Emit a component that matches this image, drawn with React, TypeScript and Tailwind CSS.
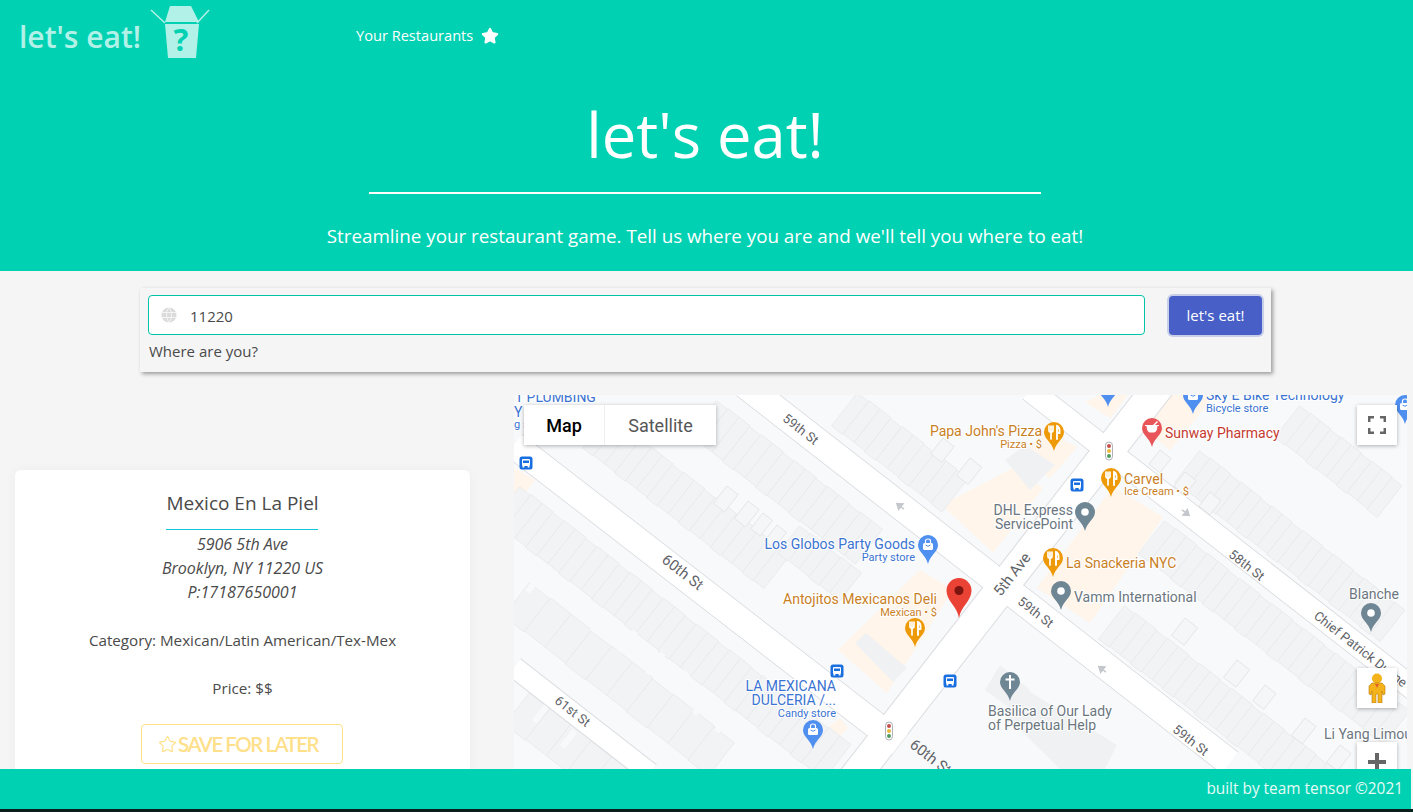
import React from 'react';
import { Star } from 'lucide-react';

const sans = { fontFamily: '"Open Sans", sans-serif' };
const ANGLE = 38;

// start point on the map, house count, house width, house depth
const houseRows = [
  [609, 414, 17, 13.5, 42],
  [800, 525, 6, 13, 35],
  [520, 486, 30, 14, 44],
  [717, 400, 15, 14, 44],
  [858, 392, 10, 14, 42],
  [1200, 450, 20, 13, 40],
  [1300, 405, 10, 13, 40],
  [1165, 520, 23, 13.5, 42],
  [1125, 605, 20, 13.5, 42],
  [530, 582, 10, 26, 42],
  [530, 692, 6, 26, 40],
];

const smallBuildings = [
  [727, 486, 14, 22],
  [748, 501, 14, 22],
  [763, 513, 12, 20],
  [777, 525, 12, 20],
  [943, 438, 14, 20],
  [970, 458, 15, 22],
  [1185, 618, 16, 22],
  [1237, 660, 16, 22],
  [1265, 685, 14, 20],
  [1305, 718, 14, 22],
  [1340, 745, 14, 22],
  [1160, 450, 14, 18],
  [1185, 472, 14, 18],
  [1210, 492, 14, 18],
];

const slits = [
  [525, 590, 22, 6],
  [590, 630, 22, 7],
  [617, 650, 26, 6],
  [645, 672, 26, 6],
  [668, 690, 26, 6],
  [692, 712, 26, 6],
  [714, 730, 24, 6],
  [532, 720, 20, 6],
  [560, 745, 20, 6],
];

const shopAreas = [
  '942,505 1013,468 1043,488 993,553',
  '1043,430 1077,447 1050,478 1020,460',
  '1113,487 1163,517 1090,623 1037,588',
  '920,570 953,590 887,693 838,650',
  '803,747 840,718 848,728 812,762',
  '514,468 535,480 520,500 514,496',
  '1100,395 1128,395 1110,418 1085,402',
  '1170,450 1215,395 1170,395 1145,430',
];

const grayBlocks = [
  '985,690 1000,665 1030,690 1015,712',
  '1027,690 1117,745 1105,769 1060,769 1005,715',
  '855,643 866,633 907,668 893,682',
  '1005,460 1025,445 1055,465 1030,490',
];

const labels: [string, number, number, 'start' | 'middle' | 'end', number, string][] = [
  ['T PLUMBING', 515, 402, 'start', 14, '#3a73d1'],
  ['Y', 514, 417, 'start', 14, '#3a73d1'],
  ['g s', 514, 428, 'start', 11, '#3a73d1'],
  ['Sky E Bike Technology', 1206, 400, 'start', 14, '#3a73d1'],
  ['Bicycle store', 1206, 412, 'start', 11, '#3a73d1'],
  ["Papa John's Pizza", 1042, 436, 'end', 14, '#c9801f'],
  ['Pizza • $', 1042, 448, 'end', 11, '#c9801f'],
  ['Sunway Pharmacy', 1165, 438, 'start', 14, '#c5392f'],
  ['Carvel', 1124, 484, 'start', 14, '#c9801f'],
  ['Ice Cream • $', 1124, 495, 'start', 11, '#c9801f'],
  ['DHL Express', 1073, 515, 'end', 14, '#6b7680'],
  ['ServicePoint', 1073, 529, 'end', 14, '#6b7680'],
  ['La Snackeria NYC', 1066, 568, 'start', 14, '#c9801f'],
  ['Vamm International', 1074, 602, 'start', 14, '#6b7680'],
  ['Blanche', 1374, 599, 'middle', 14, '#6b7680'],
  ['Los Globos Party Goods', 915, 549, 'end', 14, '#3a73d1'],
  ['Party store', 915, 561, 'end', 11, '#3a73d1'],
  ['Antojitos Mexicanos Deli', 937, 604, 'end', 14, '#c9801f'],
  ['Mexican • $', 937, 616, 'end', 11, '#c9801f'],
  ['LA MEXICANA', 836, 691, 'end', 14, '#3a73d1'],
  ['DULCERIA /...', 836, 705, 'end', 14, '#3a73d1'],
  ['Candy store', 836, 717, 'end', 11, '#3a73d1'],
  ['Basilica of Our Lady', 988, 716, 'start', 14, '#6b7680'],
  ['of Perpetual Help', 988, 730, 'start', 14, '#6b7680'],
  ['Li Yang Limou', 1324, 739, 'start', 14, '#6b7680'],
];

const streetLabels: [string, number, number, number, number][] = [
  ['59th St', 800, 430, 38, 13],
  ['60th St', 682, 573, 38, 15],
  ['61st St', 572, 712, 38, 13],
  ['59th St', 1035, 613, 38, 13],
  ['59th St', 1190, 741, 38, 13],
  ['58th St', 1246, 566, 38, 13],
  ['Chief Patrick Dunne', 1360, 650, 38, 13],
  ['5th Ave', 1013, 575, -52, 15],
  ['60th St', 930, 758, 38, 15],
];

const arrows = [
  [900, 506, 218],
  [1186, 513, 38],
  [1102, 669, 218],
];

const Pin = ({ x, y, color, kind }: { x: number; y: number; color: string; kind: string }) => (
  <g transform={`translate(${x} ${y})`}>
    <path d="M0 0C-2-9-10-12-10-19A10 10 0 1 1 10-19C10-12 2-9 0 0Z" fill={color} />
    {kind === 'food' && (
      <g stroke="#fff" fill="none" strokeLinecap="round">
        <path d="M-5-25V-20.500Q-5-19-3-19T-1-20.500V-25M-3-25V-12" strokeWidth="1.700" />
        <path d="M3-12V-25Q6-24 5.500-18H3" strokeWidth="1.900" />
      </g>
    )}
    {kind === 'dot' && <circle cx="0" cy="-19" r="3.800" fill="#fff" />}
    {kind === 'bag' && (
      <g>
        <rect x="-5" y="-21" width="10" height="7" rx="1.500" fill="#fff" />
        <path d="M-2.500-21V-23Q-2.500-25 0-25T2.500-23V-21" stroke="#fff" strokeWidth="1.200" fill="none" />
        <path d="M-2.500-19Q0-16.500 2.500-19" stroke={color} strokeWidth="1" fill="none" />
      </g>
    )}
    {kind === 'mortar' && (
      <g fill="#fff">
        <path d="M-7-22H7V-21H5.500Q5-15 2-14.500H-2Q-5-15-5.500-21H-7Z" />
        <path d="M1-22 5-26 6-25 3-22Z" />
      </g>
    )}
    {kind === 'cross' && <path d="M-1-26H1V-22.500H4.500V-20.500H1V-12H-1V-20.500H-4.500V-22.500H-1Z" fill="#fff" />}
  </g>
);

const Bus = ({ x, y }: { x: number; y: number }) => (
  <g transform={`translate(${x - 6.5} ${y - 6.5})`}>
    <rect width="13" height="13" rx="2.500" fill="#1a6fe0" />
    <rect x="2.500" y="2.500" width="8" height="7" rx="1" fill="#fff" />
    <rect x="3.500" y="4" width="6" height="2.500" fill="#1a6fe0" />
    <rect x="3" y="9.500" width="1.800" height="1.500" fill="#fff" />
    <rect x="8.200" y="9.500" width="1.800" height="1.500" fill="#fff" />
  </g>
);

const TrafficLight = ({ x, y }: { x: number; y: number }) => (
  <g transform={`translate(${x} ${y})`}>
    <rect x="-3.500" y="-9" width="7" height="18" rx="3.500" fill="#fff" stroke="#9aa0a6" strokeWidth="0.800" />
    <circle cy="-5" r="2" fill="#c5504a" />
    <circle cy="0" r="2" fill="#e8b93c" />
    <circle cy="5" r="2" fill="#4f9a5f" />
  </g>
);

const MapDrawing = () => (
  <svg viewBox="514 395 893 374" className="w-full h-full" style={{ fontFamily: 'Roboto, sans-serif' }}>
    <rect x="514" y="395" width="893" height="374" fill="#f8f9fa" />
    {shopAreas.map((points) => (
      <polygon key={points} points={points} fill="#fff5ea" />
    ))}
    {houseRows.map(([x, y, count, w, d], r) => (
      <g key={r} transform={`translate(${x} ${y}) rotate(${ANGLE})`}>
        {Array.from({ length: count }).map((_, i) => (
          <rect key={i} x={i * w} y={i % 3 === 0 ? 1 : 0} width={w} height={d} fill="#f2f3f4" stroke="#e8e9eb" strokeWidth="0.800" />
        ))}
      </g>
    ))}
    {smallBuildings.map(([x, y, w, h]) => (
      <rect key={`${x}-${y}`} x={x} y={y} width={w} height={h} fill="#f5f6f7" stroke="#e0e2e5" strokeWidth="0.800" transform={`rotate(${ANGLE} ${x} ${y})`} />
    ))}
    {slits.map(([x, y, w, h]) => (
      <rect key={`${x}-${y}`} x={x} y={y} width={w} height={h} fill="#f8f9fa" transform={`rotate(-52 ${x} ${y})`} />
    ))}
    {grayBlocks.map((points) => (
      <polygon key={points} points={points} fill="#f0f1f3" />
    ))}
    {/* roads */}
    {[
      [514, 445, 900, 744, 26],
      [745, 385, 1230, 763, 26],
      [1030, 390, 1420, 694, 22],
      [514, 667, 650, 773, 20],
    ].map(([x1, y1, x2, y2, w]) => (
      <g key={x1 + y1}>
        <line x1={x1} y1={y1} x2={x2} y2={y2} stroke="#dadce0" strokeWidth={w + 2} />
        <line x1={x1} y1={y1} x2={x2} y2={y2} stroke="#fff" strokeWidth={w} />
      </g>
    ))}
    <line x1="1160" y1="385" x2="850" y2="783" stroke="#dadce0" strokeWidth="32" />
    <line x1="1160" y1="385" x2="850" y2="783" stroke="#fff" strokeWidth="30" />
    <line x1="745" y1="385" x2="1230" y2="763" stroke="#fff" strokeWidth="26" />
    <line x1="514" y1="445" x2="900" y2="744" stroke="#fff" strokeWidth="26" />
    <line x1="1030" y1="390" x2="1420" y2="694" stroke="#fff" strokeWidth="22" />

    {arrows.map(([x, y, rot]) => (
      <path key={x} d="M-5 0H2M-1-3.500 4 0-1 3.500Z" stroke="#c4c7cb" strokeWidth="1.500" fill="#c4c7cb" transform={`translate(${x} ${y}) rotate(${rot})`} />
    ))}
    {streetLabels.map(([text, x, y, rot, size]) => (
      <text key={`${text}${x}`} x={x} y={y} fontSize={size} fill="#5f6368" textAnchor="middle" dominantBaseline="middle" transform={`rotate(${rot} ${x} ${y})`}>
        {text}
      </text>
    ))}
    {labels.map(([text, x, y, anchor, size, color]) => (
      <text key={`${text}${x}`} x={x} y={y} fontSize={size} fill={color} textAnchor={anchor} stroke="#fff" strokeWidth="2" paintOrder="stroke">
        {text}
      </text>
    ))}
    <Pin x={1054} y={451} color="#ee9a08" kind="food" />
    <Pin x={1111} y={497} color="#ee9a08" kind="food" />
    <Pin x={1053} y={577} color="#ee9a08" kind="food" />
    <Pin x={915} y={647} color="#ee9a08" kind="food" />
    <Pin x={1085} y={531} color="#6f8695" kind="dot" />
    <Pin x={1061} y={610} color="#6f8695" kind="dot" />
    <Pin x={1371} y={632} color="#6f8695" kind="dot" />
    <Pin x={1010} y={701} color="#6f8695" kind="cross" />
    <Pin x={1152} y={447} color="#e9565a" kind="mortar" />
    <Pin x={1193} y={414} color="#4f8ff0" kind="bag" />
    <Pin x={1108} y={407} color="#4f8ff0" kind="dot" />
    <Pin x={1405} y={424} color="#4f8ff0" kind="bag" />
    <Pin x={928} y={564} color="#4f8ff0" kind="bag" />
    <Pin x={813} y={749} color="#4f8ff0" kind="bag" />
    <g transform="translate(959 618)">
      <path d="M0 0C-2-12-12.500-17-12.500-27.500A12.500 12.500 0 1 1 12.500-27.500C12.500-17 2-12 0 0Z" fill="#ea4335" />
      <circle cy="-27.500" r="4.500" fill="#7c1410" />
    </g>
    <Bus x={526} y={463} />
    <Bus x={1077} y={485} />
    <Bus x={837} y={671} />
    <Bus x={950} y={681} />
    <TrafficLight x={1109} y={451} />
    <TrafficLight x={889} y={731} />
  </svg>
);

const Logo = () => (
  <svg width="60" height="54" viewBox="0 0 60 54">
    <path d="M1 5 15 18M59 5 47 18" stroke="#b2f1e8" strokeWidth="1.500" />
    <path d="M20 1H41L49 17H15Z" fill="#b2f1e8" />
    <path d="M15 19H49L46 53H18Z" fill="#b2f1e8" />
    <text x="31" y="46" textAnchor="middle" fontSize="31" fontWeight="700" fill="#00d1b2" fontFamily="Open Sans, sans-serif">?</text>
  </svg>
);

export default function App() {
  return (
    <div className="h-[812px] w-full flex flex-col overflow-hidden bg-[#f5f5f5] text-[#4a4a4a]" style={sans}>
      <header className="bg-[#00d1b2] h-[271px] shrink-0 text-white">
        <nav className="h-[70px] flex items-center pt-[2px]">
          <span className="ml-[19px] text-[30px] font-semibold text-[#b2f1e8]">let's eat!</span>
          <span className="ml-[9px] mt-[-8px]"><Logo /></span>
          <span className="ml-[146px] text-[14.600px]">Your Restaurants</span>
          <Star className="ml-2 w-[18px] h-[18px] fill-white text-white" />
        </nav>
        <div className="text-center mr-[3px]">
          <h1 className="text-[61.500px] leading-[74px] mt-[27px]">let's eat!</h1>
          <div className="h-[2px] w-[672px] bg-white mx-auto mt-[21px]" />
          <p className="mt-[28px] text-[18.800px]">Streamline your restaurant game. Tell us where you are and we'll tell you where to eat!</p>
        </div>
      </header>

      <main className="flex-1 min-h-0 overflow-hidden">
        <div className="ml-[140px] mt-[17px] w-[1131px] h-[84px] bg-[#f5f5f5] shadow-[2px_2px_4px_#9a9a9a] px-2 pt-[7px] flex gap-6">
          <div className="flex-1">
            <div className="h-10 rounded border border-[#00c4a7] bg-white flex items-center pl-3">
              <svg width="16" height="16" viewBox="0 0 16 16" className="text-[#dbdbdb]" fill="currentColor">
                <circle cx="8" cy="8" r="7.500" />
                <path d="M0 5.500H16M0 10.500H16M8 0Q3 8 8 16M8 0Q13 8 8 16" stroke="#f5f5f5" strokeWidth="1" fill="none" />
              </svg>
              <span className="ml-[13px] mt-[2px] text-[15px]">11220</span>
            </div>
            <p className="mt-[5px] ml-px text-[15px] leading-[22px]">Where are you?</p>
          </div>
          <button className="w-[93px] h-[39px] mt-px mr-px rounded bg-[#485fc7] text-white text-[15px] shadow-[0_0_0_2px_rgba(72,95,199,0.25)]">let's eat!</button>
        </div>

        <div className="flex mt-[23px]">
          <div className="w-[500px] shrink-0 pl-[15px]">
            <section className="w-[455px] mt-[75px] bg-white rounded-md shadow-[0_0_12px_rgba(0,0,0,0.04)] text-center pt-[19px] pb-4 text-[15.200px] leading-6">
              <h2 className="text-[19px] leading-[28px]">Mexico En La Piel</h2>
              <div className="w-[152px] h-px bg-[#14c8dc] ml-[151px] mt-[12px] mb-[2px]" />
              <p className="italic text-[16px]">5906 5th Ave</p>
              <p className="italic text-[16px]">Brooklyn, NY 11220 US</p>
              <p className="italic text-[16px]">P:17187650001</p>
              <p className="mt-6">Category: Mexican/Latin American/Tex-Mex</p>
              <p className="mt-6">Price: $$</p>
              <button className="mt-6 ml-[126px] w-[202px] h-10 rounded border border-[#ffe08a] text-[#ffe08a] flex items-center pl-[16px] text-[20.500px] font-semibold tracking-[-1.500px]" style={{ fontFamily: 'Lato, sans-serif' }}>
                <Star className="w-[19px] h-[19px] mr-px" strokeWidth={1.500} />
                SAVE FOR LATER
              </button>
            </section>
          </div>

          <div className="relative ml-[14px] w-[893px] h-[374px] shrink-0 overflow-hidden">
            <MapDrawing />
            <div className="absolute left-[10px] top-[10px] h-10 flex bg-white shadow-[0_1px_4px_rgba(0,0,0,0.3)] text-[18px]" style={{ fontFamily: 'Roboto, sans-serif' }}>
              <span className="w-[81px] flex items-center justify-center border-r border-[#eee] text-black font-medium">Map</span>
              <span className="w-[111px] flex items-center justify-center text-[#565656]">Satellite</span>
            </div>
            <div className="absolute right-[10px] top-[10px] w-10 h-10 bg-white shadow-[0_1px_4px_rgba(0,0,0,0.3)] flex items-center justify-center">
              <svg width="18" height="18" viewBox="0 0 18 18" fill="none" stroke="#666" strokeWidth="2.500">
                <path d="M1.200 6V1.200H6M12 1.200H16.800V6M16.800 12V16.800H12M6 16.800H1.200V12" />
              </svg>
            </div>
            <div className="absolute right-[10px] top-[273px] w-10 h-10 bg-white shadow-[0_1px_4px_rgba(0,0,0,0.3)] flex items-center justify-center">
              <svg width="18" height="30" viewBox="0 0 18 30">
                <circle cx="9" cy="5.500" r="5" fill="#f5b31b" />
                <path d="M4 10H14L17 13 17 21 15 22 14 18V30H10V21H8V30H4V18L3 22 1 21 1 13Z" fill="#f5b31b" stroke="#b57a10" strokeWidth="0.600" />
                <path d="M7 11 9 15 11 11Z" fill="#e0612a" />
              </svg>
            </div>
            <div className="absolute right-[10px] top-[347px] w-10 h-10 bg-white shadow-[0_1px_4px_rgba(0,0,0,0.3)] flex items-center justify-center">
              <svg width="18" height="18" viewBox="0 0 18 18" fill="#666">
                <path d="M7 0H11V7H18V11H11V18H7V11H0V7H7Z" />
              </svg>
            </div>
          </div>
        </div>
      </main>

      <footer className="h-10 shrink-0 bg-[#00d1b2] text-right pr-[8px] mr-[2px] text-[15.400px] leading-10 text-[#e6fbf7]">
        built by team tensor ©2021
      </footer>
      <div className="h-[3px] shrink-0 bg-[#0a1f1c]" />
    </div>
  );
}
